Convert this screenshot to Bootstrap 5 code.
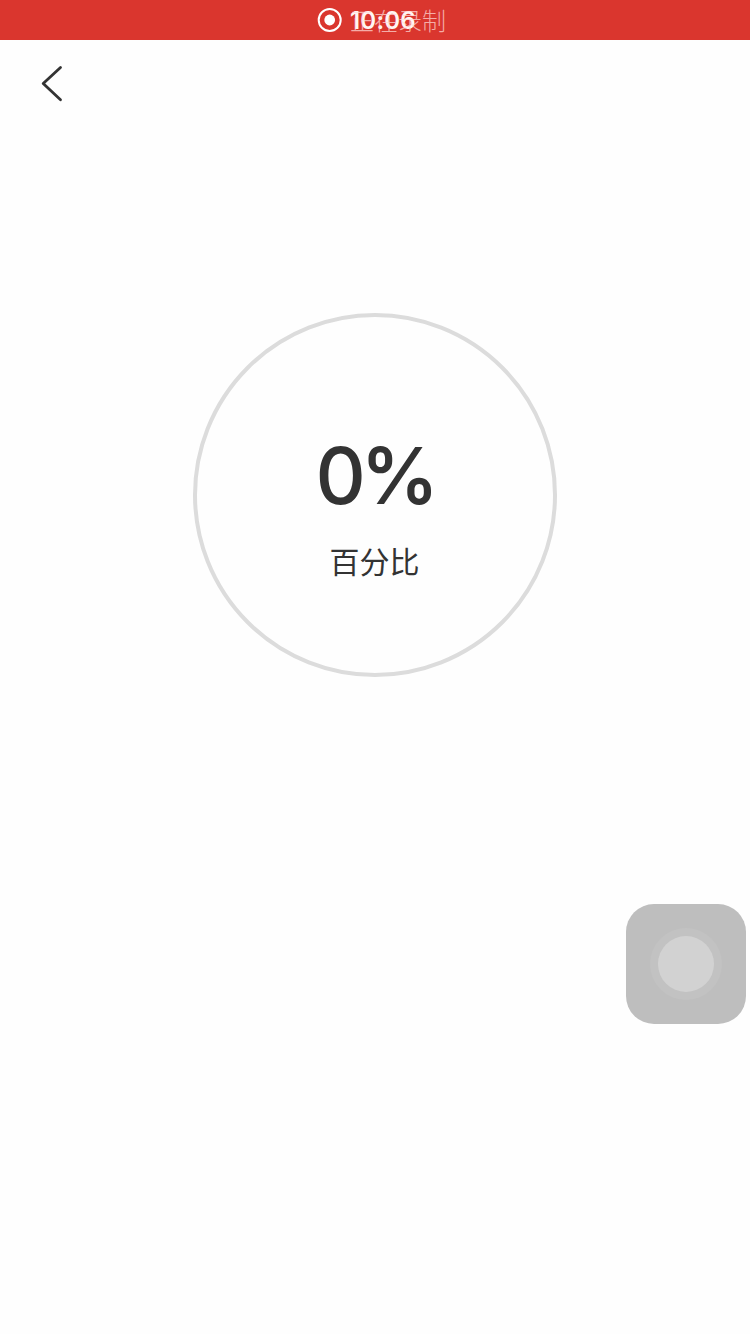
<!DOCTYPE html>
<html lang="zh-CN">
<head>
<meta charset="utf-8">
<meta name="viewport" content="width=device-width, initial-scale=1">
<title>百分比</title>
<link rel="stylesheet" href="https://cdn.jsdelivr.net/npm/bootstrap@5.3.0/dist/css/bootstrap.min.css">
<style>
body{font-family:"Inter","Noto Sans CJK SC",sans-serif;background:#fefefe;color:#333;min-height:1334px}
.rec-bar{height:40px;background:#da362e;color:#fff;padding-left:317px}
.rec-text{margin-left:8px;width:97px;height:40px;line-height:40px;white-space:nowrap}
.rec-time{font-size:24px;font-weight:600;letter-spacing:.2px;line-height:42px;color:#fff5f4}
.rec-label{font-family:"Noto Sans CJK SC",sans-serif;font-size:24px;font-weight:300;color:rgba(255,220,217,.72)}
.top-nav{height:88px;padding:25px 0 0 40px}
.back-btn{line-height:0;color:#333}
.ring{width:364px;height:364px;margin-top:185px;border:4px solid #dcdcdc}
.pct{font-size:78px;font-weight:500;line-height:82px;height:80px;width:119px;margin-top:118px}
.pct-sign{font-weight:600;margin-left:-5px;transform:scaleX(.99);transform-origin:0 50%}
.ring-label{font-family:"Noto Sans CJK SC",sans-serif;font-size:30px;line-height:44px;margin-top:23px;padding-right:1px}
.assist{width:120px;height:120px;right:4px;top:904px;border-radius:28px;background:#bebebe}
.assist-halo{width:72px;height:72px;background:#c2c2c2}
.assist-dot{width:56px;height:56px;background:#d2d2d2}
</style>
</head>
<body class="position-relative overflow-hidden">
<header class="rec-bar d-flex align-items-center">
  <svg width="25" height="26" viewBox="0 0 25 26"><circle cx="12.7" cy="13" r="11" fill="none" stroke="#fff" stroke-width="2"/><circle cx="12.7" cy="13" r="5.4" fill="#fff"/></svg>
  <div class="rec-text position-relative">
    <span class="rec-time position-absolute top-0 start-0">10:06</span>
    <span class="rec-label position-absolute top-0 start-0">正在录制</span>
  </div>
</header>
<nav class="top-nav d-flex align-items-start">
  <a href="#" class="back-btn" aria-label="返回"><svg width="24" height="38" viewBox="0 0 24 38" fill="none" stroke="currentColor" stroke-width="2.8" stroke-linecap="round" stroke-linejoin="round"><path d="M20.5 2.5 3.2 18.5 20.5 34.8"/></svg></a>
</nav>
<main class="d-flex justify-content-center">
  <section class="ring rounded-circle d-flex flex-column align-items-center">
    <div class="pct d-flex"><span>0</span><span class="pct-sign">%</span></div>
    <div class="ring-label">百分比</div>
  </section>
</main>
<div class="assist position-absolute d-flex align-items-center justify-content-center">
  <div class="assist-halo rounded-circle d-flex align-items-center justify-content-center"><div class="assist-dot rounded-circle"></div></div>
</div>
<script src="https://cdn.jsdelivr.net/npm/bootstrap@5.3.0/dist/js/bootstrap.bundle.min.js"></script>
</body>
</html>
